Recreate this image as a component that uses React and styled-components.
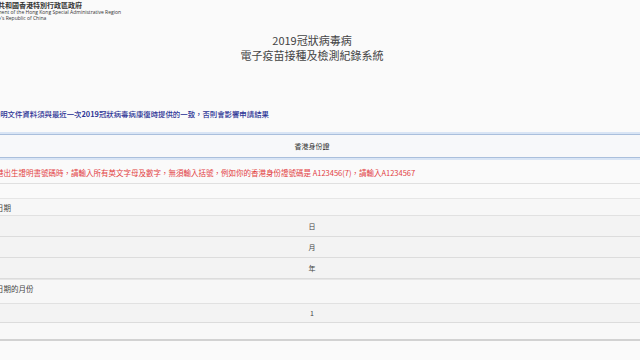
import React from "react";
import styled, { createGlobalStyle } from "styled-components";

const GlobalStyle = createGlobalStyle`
  body {
    margin: 0;
    background: #fafafa;
    font-family: "Noto Sans CJK TC", "Noto Sans", sans-serif;
    color: #333;
  }
`;

const Page = styled.div`
  width: 640px;
  height: 360px;
  overflow: hidden;
  background: #fafafa;
`;

const Shift = styled.div`
  margin-left: -40px;
  width: 704px;
`;

const Brand = styled.div`
  padding: 1px 0 0 10px;
  height: 21px;
`;

const BrandZh = styled.div`
  font-size: 7px;
  line-height: 8px;
  font-weight: 700;
  color: #333;
`;

const BrandEn = styled.div`
  font-family: "Open Sans", "Liberation Sans", sans-serif;
  font-size: 5px;
  line-height: 6px;
  color: #333;
`;

const Title = styled.h1`
  margin: 11px 0 0;
  text-align: center;
  font-size: 11px;
  line-height: 15px;
  font-weight: 400;
  color: #444;
`;

const Notice = styled.p`
  margin: 46px 0 0;
  padding-left: ${props => props.indent}px;
  font-size: 7.4px;
  line-height: 10px;
  font-weight: 500;
  color: #2d3596;
  white-space: nowrap;

  b {
    font-weight: 700;
  }
`;

const IdSelect = styled.div`
  margin-top: 15px;
  height: 22px;
  display: flex;
  align-items: center;
  justify-content: center;
  background: #f7f8fa;
  border-top: 1px solid #aabfdc;
  border-bottom: 1px solid #aabfdc;
  box-shadow: 0 0 0 2px rgba(190, 212, 240, 0.55);
  font-size: 7px;
  color: #333;
`;

const Hint = styled.p`
  margin: 10px 0 0;
  padding: 0 0 5px ${props => props.indent}px;
  font-size: 7.5px;
  line-height: 10px;
  color: #e2403f;
  white-space: nowrap;
  border-bottom: 1px solid #e0e0e0;
`;

const Field = styled.div`
  margin-top: ${props => props.gap}px;
`;

const Label = styled.div`
  height: ${props => props.h}px;
  box-sizing: border-box;
  padding: ${props => props.top}px 0 0 ${props => props.indent}px;
  font-size: 7.5px;
  line-height: 9px;
  color: #444;
  background: #f7f7f7;
  border-top: 1px solid #e6e6e6;
  border-bottom: 1px solid #e1e1e1;
  white-space: nowrap;
`;

const Option = styled.div`
  height: ${props => props.h}px;
  box-sizing: border-box;
  display: flex;
  align-items: center;
  justify-content: center;
  background: ${props => (props.blank ? "#f8f8f8" : "#f3f3f3")};
  border-bottom: ${props => (props.strong ? "2px solid #d2d2d2" : "1px solid #dcdcdc")};
  font-size: 7px;
  color: #444;
`;

export default function App() {
  return (
    <Page>
      <GlobalStyle />
      <Shift>
        <Brand>
          <BrandZh>中華人民共和國香港特別行政區政府</BrandZh>
          <BrandEn>The Government of the Hong Kong Special Administrative Region</BrandEn>
          <BrandEn>of the People's Republic of China</BrandEn>
        </Brand>
        <Title>
          2019冠狀病毒病
          <br />
          電子疫苗接種及檢測紀錄系統
        </Title>
        <Notice indent={18}>
          身份證明文件資料須與最近一次<b>2019</b>冠狀病毒病康復時提供的一致，否則會影響申請結果
        </Notice>
        <IdSelect>香港身份證</IdSelect>
        <Hint indent={6}>
          如輸入香港出生證明書號碼時，請輸入所有英文字母及數字，無須輸入括號，例如你的香港身份證號碼是 A123456(7)，請輸入A1234567
        </Hint>
        <Field gap={14}>
          <Label h={18} top={4} indent={21}>康復日期</Label>
          <Option h={21}>日</Option>
          <Option h={21}>月</Option>
          <Option h={21}>年</Option>
        </Field>
        <Field gap={0}>
          <Label h={25} top={4} indent={21}>康復日期的月份</Label>
          <Option h={19}>1</Option>
          <Option h={18} blank strong />
        </Field>
      </Shift>
    </Page>
  );
}
